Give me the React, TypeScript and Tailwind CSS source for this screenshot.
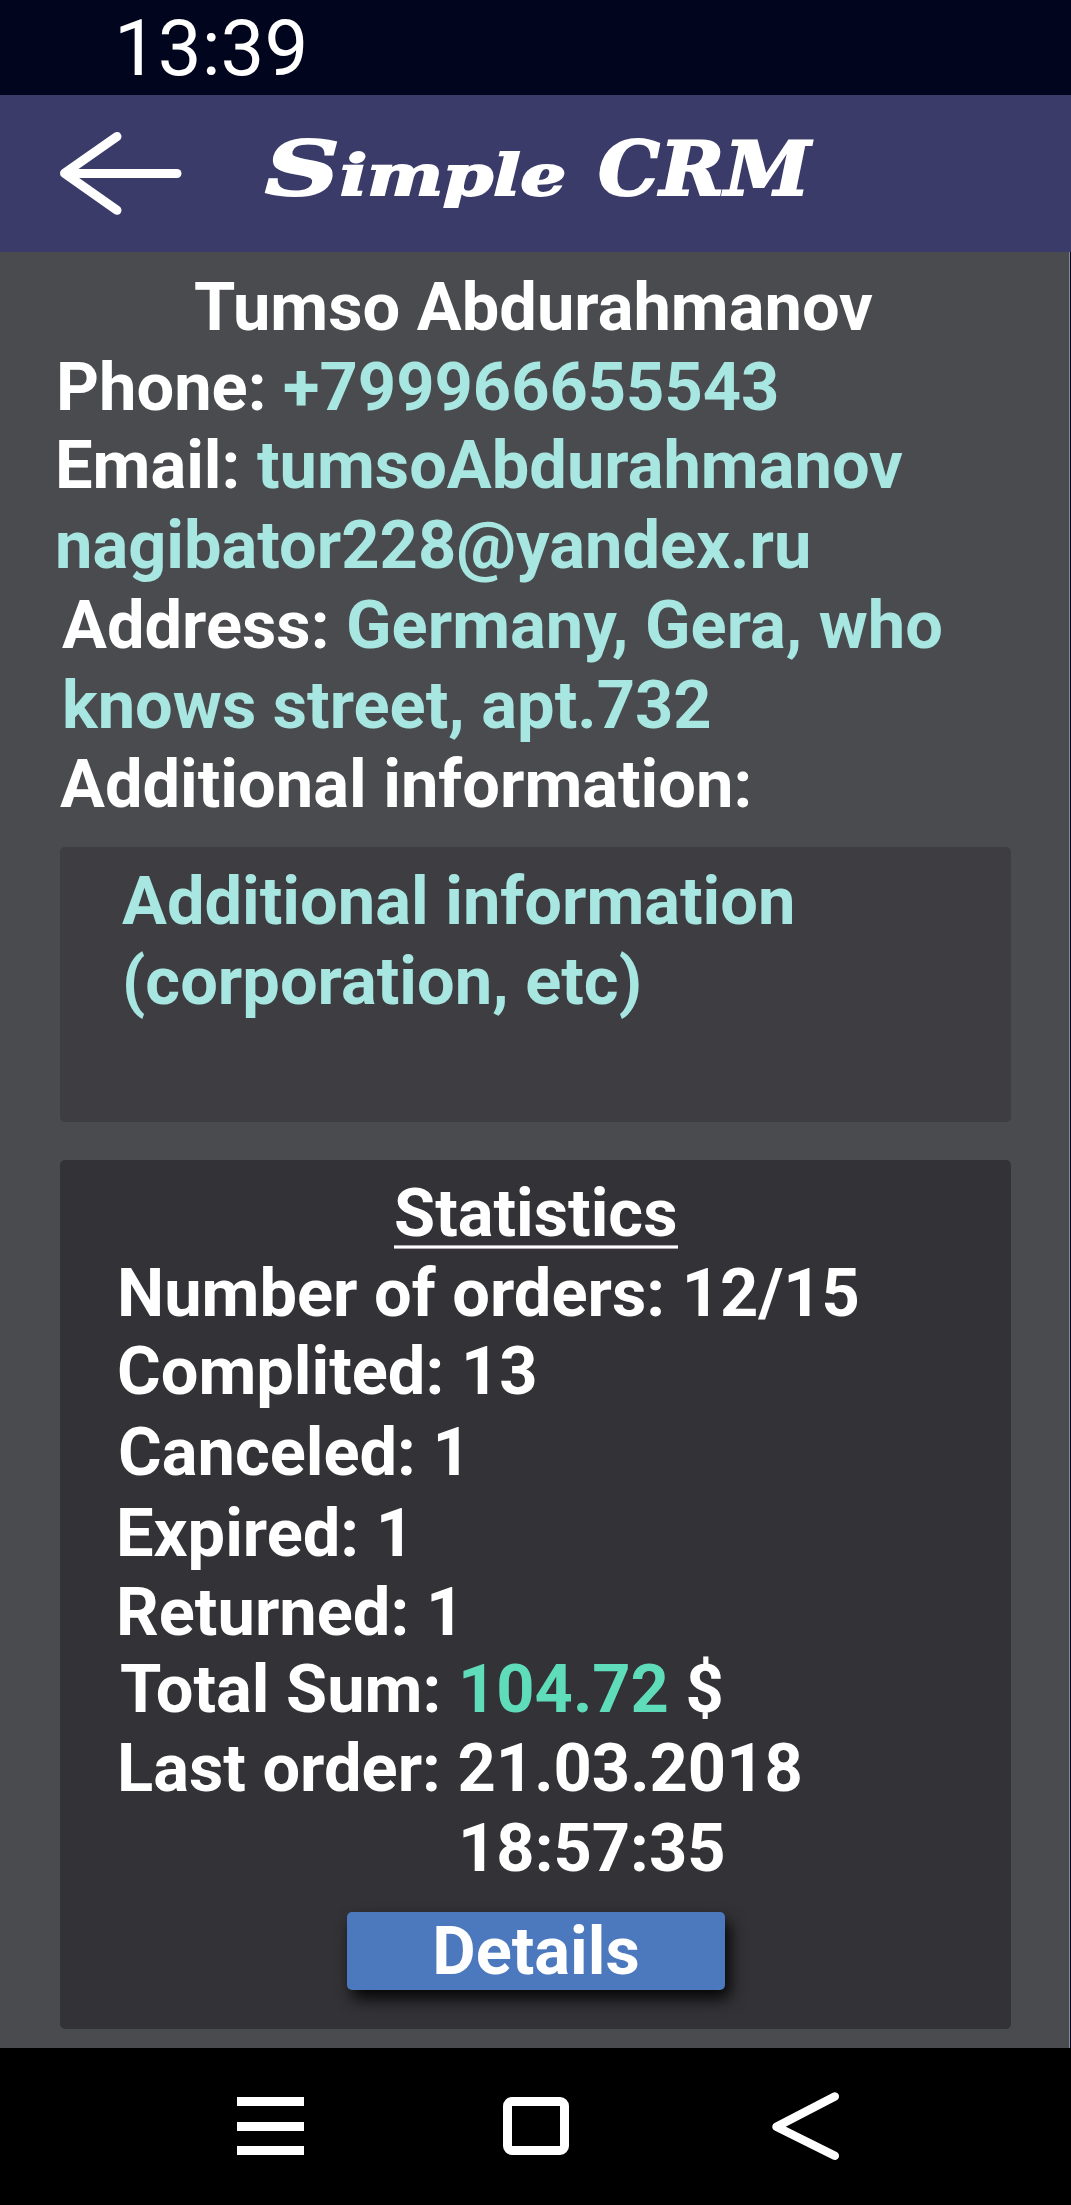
import type { ReactNode } from 'react';

function Row({ className, children }: { className: string; children: ReactNode }) {
  return <p className={`shrink-0 whitespace-pre leading-[80px] ${className}`}>{children}</p>;
}

function Value({ children }: { children: ReactNode }) {
  return <span className="text-[#a7e6e1]">{children}</span>;
}

function StatusBar() {
  return (
    <div className="h-[95px] shrink-0 bg-[#01051e] pl-[114px] pt-[2px] text-[78px] font-normal leading-[94px]">
      13:39
    </div>
  );
}

function Header() {
  return (
    <header className="flex h-[157px] shrink-0 items-start bg-[#3a3b69] pl-[58px] pt-[34px]">
      <button aria-label="Back" className="h-[90px] w-[126px] shrink-0">
        <svg
          viewBox="58 129 126 90"
          className="h-[90px] w-[126px]"
          fill="none"
          stroke="white"
          strokeWidth="9"
          strokeLinecap="round"
          strokeLinejoin="round"
        >
          <path d="M117 136.5 64.500 173.300 117 210.300" />
          <path d="M66 173.500H177" />
        </svg>
      </button>
      <h1 className="ml-[81px] flex items-baseline whitespace-nowrap font-['DejaVu_Serif',serif] text-[74px] font-bold italic leading-[80px] [-webkit-text-stroke:2px_white]">
        <span className="w-[75px] origin-left scale-x-[1.4]">S</span>
        <span className="w-[258px] origin-left scale-x-[1.28] text-[56px]">imple</span>
        <span className="origin-left scale-x-[1.05]">CRM</span>
      </h1>
    </header>
  );
}

function Statistics() {
  return (
    <section className="ml-[60px] mr-[58px] mt-[38px] flex h-[869px] shrink-0 flex-col rounded-[5px] bg-[#333236] pt-[13px]">
      <div className="h-[80px] pl-[334px]">
        <h2 className="h-[72px] whitespace-nowrap leading-[80px]">Statistics</h2>
        <div className="h-1 w-[284px] border-y border-[#b0a9ad] bg-white" />
      </div>
      <Row className="h-[78px] pl-[57px]">Number of orders: 12/15</Row>
      <Row className="h-[81px] pl-[57px]">Complited: 13</Row>
      <Row className="h-[81px] pl-[58px]">Canceled: 1</Row>
      <Row className="h-[79px] pl-[56px]">Expired: 1</Row>
      <Row className="h-[77px] pl-[56px]">Returned: 1</Row>
      <Row className="h-[79px] pl-[60px]">
        Total Sum: <span className="text-[#5fdcb9]">104.72</span> $
      </Row>
      <Row className="h-[80px] pl-[57px]">Last order: 21.03.2018</Row>
      <Row className="h-[104px] pl-[398px]">18:57:35</Row>
      <button className="ml-[287px] h-[78px] w-[378px] rounded-[5px] bg-[#4c79bd] text-center leading-[78px] shadow-[5px_9px_16px_rgba(0,0,0,0.9)]">
        Details
      </button>
    </section>
  );
}

function NavBar() {
  return (
    <nav className="flex h-[157px] shrink-0 items-start bg-black pl-[237px] pt-[49px]">
      <div className="flex h-[58px] w-[67px] flex-col justify-between">
        <span className="h-[9px] bg-white" />
        <span className="h-[9px] bg-white" />
        <span className="h-[9px] bg-white" />
      </div>
      <div className="ml-[199px] h-[58px] w-[66px] rounded-[9px] border-[9px] border-white" />
      <svg
        viewBox="769 2090 74 74"
        className="-mt-[7px] ml-[200px] h-[74px] w-[74px]"
        fill="none"
        stroke="white"
        strokeWidth="8.500"
        strokeLinecap="round"
        strokeLinejoin="round"
      >
        <path d="M834.800 2096.500 776.500 2126.700 834.800 2155.800" />
      </svg>
    </nav>
  );
}

export default function App() {
  return (
    <div className="flex h-[2205px] w-[1071px] flex-col overflow-hidden bg-black font-[Roboto,sans-serif] text-[66.8px] font-bold text-white">
      <StatusBar />
      <Header />
      <div className="flex h-[1796px] shrink-0 bg-[#01051e]">
        <main className="flex w-[1070px] flex-col border-r border-[#8b8795] bg-[#4a4b4f] pt-[15px]">
          <Row className="h-[80px] pl-[194px]">Tumso Abdurahmanov</Row>
          <Row className="h-[78px] pl-[56px]">
            Phone: <Value>+799966655543</Value>
          </Row>
          <Row className="h-[80px] pl-[55px]">
            Email: <Value>tumsoAbdurahmanov</Value>
          </Row>
          <Row className="h-[80px] pl-[55px]">
            <Value>nagibator228@yandex.ru</Value>
          </Row>
          <Row className="h-[80px] pl-[62px]">
            Address: <Value>Germany, Gera, who</Value>
          </Row>
          <Row className="h-[79px] pl-[62px]">
            <Value>knows street, apt.732</Value>
          </Row>
          <Row className="h-[103px] pl-[60px]">Additional information:</Row>
          <section className="ml-[60px] mr-[58px] flex h-[275px] shrink-0 flex-col rounded-[5px] bg-[#3e3d42] pl-[62px] pt-[14px]">
            <Row className="h-[80px]">
              <Value>Additional information</Value>
            </Row>
            <Row className="h-[80px]">
              <Value>(corporation, etc)</Value>
            </Row>
          </section>
          <Statistics />
        </main>
      </div>
      <NavBar />
    </div>
  );
}
